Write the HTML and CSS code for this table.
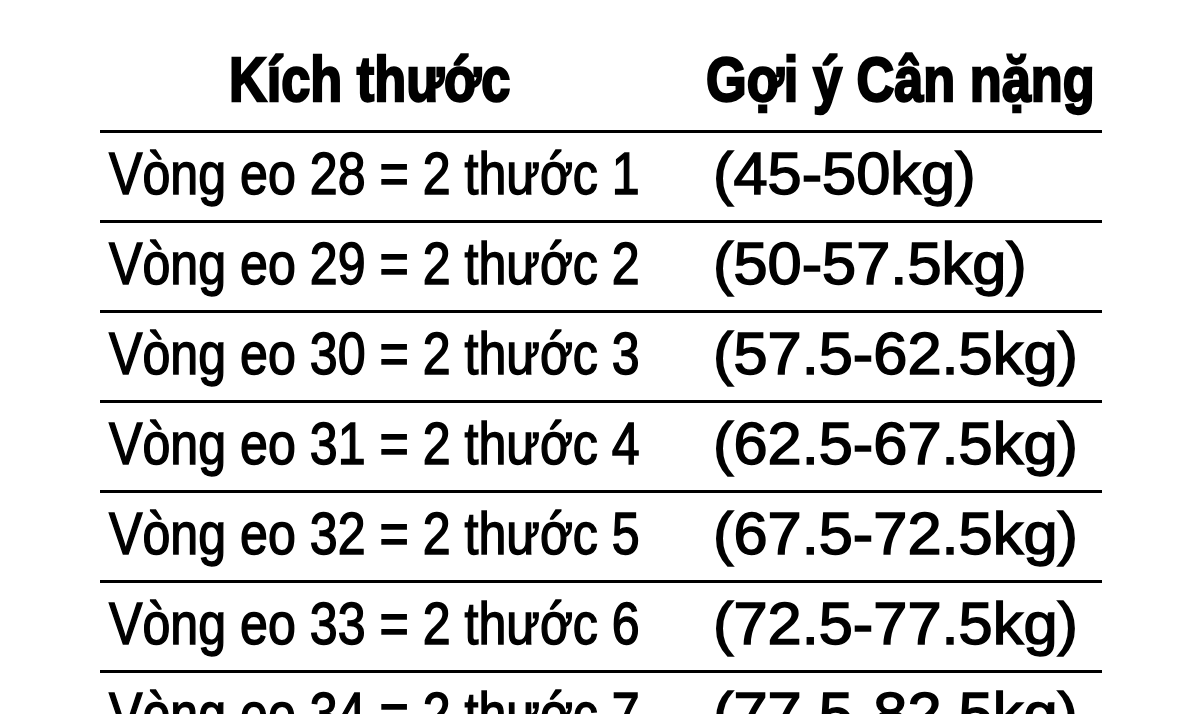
FILE: index.html
```html
<!DOCTYPE html>
<html lang="vi">
<head>
<meta charset="utf-8">
<link rel="stylesheet" href="styles.css">
</head>
<body>
<div class="chart">
  <div class="head">
    <div class="h1"><span class="t">Kích thước</span></div>
    <div class="h2"><span class="t">Gợi ý Cân nặng</span></div>
  </div>
  <div class="row"><div class="c1"><span class="t">Vòng eo 28 = 2 thước 1</span></div><div class="c2"><span class="t">(45-50kg)</span></div></div>
  <div class="row"><div class="c1"><span class="t">Vòng eo 29 = 2 thước 2</span></div><div class="c2"><span class="t">(50-57.5kg)</span></div></div>
  <div class="row"><div class="c1"><span class="t">Vòng eo 30 = 2 thước 3</span></div><div class="c2"><span class="t">(57.5-62.5kg)</span></div></div>
  <div class="row"><div class="c1"><span class="t">Vòng eo 31 = 2 thước 4</span></div><div class="c2"><span class="t">(62.5-67.5kg)</span></div></div>
  <div class="row"><div class="c1"><span class="t">Vòng eo 32 = 2 thước 5</span></div><div class="c2"><span class="t">(67.5-72.5kg)</span></div></div>
  <div class="row"><div class="c1"><span class="t">Vòng eo 33 = 2 thước 6</span></div><div class="c2"><span class="t">(72.5-77.5kg)</span></div></div>
  <div class="row"><div class="c1"><span class="t">Vòng eo 34 = 2 thước 7</span></div><div class="c2"><span class="t">(77.5-82.5kg)</span></div></div>
</div>
</body>
</html>
```
FILE: styles.css
```css
html, body {
  margin: 0;
  padding: 0;
  background: #fff;
  overflow: hidden;
}
body {
  width: 1199px;
  height: 714px;
  font-family: "Liberation Sans", Arial, sans-serif;
  color: #000;
}
.chart {
  margin-left: 100px;
  width: 1002px;
}
.t {
  display: inline-block;
  white-space: nowrap;
  transform-origin: left center;
}
.head {
  height: 130px;
  box-sizing: border-box;
  padding-top: 48px;
  display: flex;
  font-weight: bold;
  font-size: 63px;
  line-height: 63px;
  -webkit-text-stroke: 2.4px #000;
}
.head .t {
  transform: scaleX(0.83);
}
.h1 {
  flex: 0 0 606px;
  min-width: 0;
  padding-left: 129px;
  box-sizing: border-box;
}
.h2 {
  flex: 0 0 auto;
}
.row {
  height: 87px;
  border-top: 3px solid #000;
  display: flex;
  font-size: 59px;
  line-height: 83px;
  -webkit-text-stroke: 1.5px #000;
}
.c1 {
  flex: 0 0 613px;
  min-width: 0;
  padding-left: 9px;
  box-sizing: border-box;
}
.c2 {
  flex: 0 0 auto;
  min-width: 0;
}
.c1 .t {
  transform: scaleX(0.85);
}
.c2 .t {
  transform: scaleX(1.04);
}
```
